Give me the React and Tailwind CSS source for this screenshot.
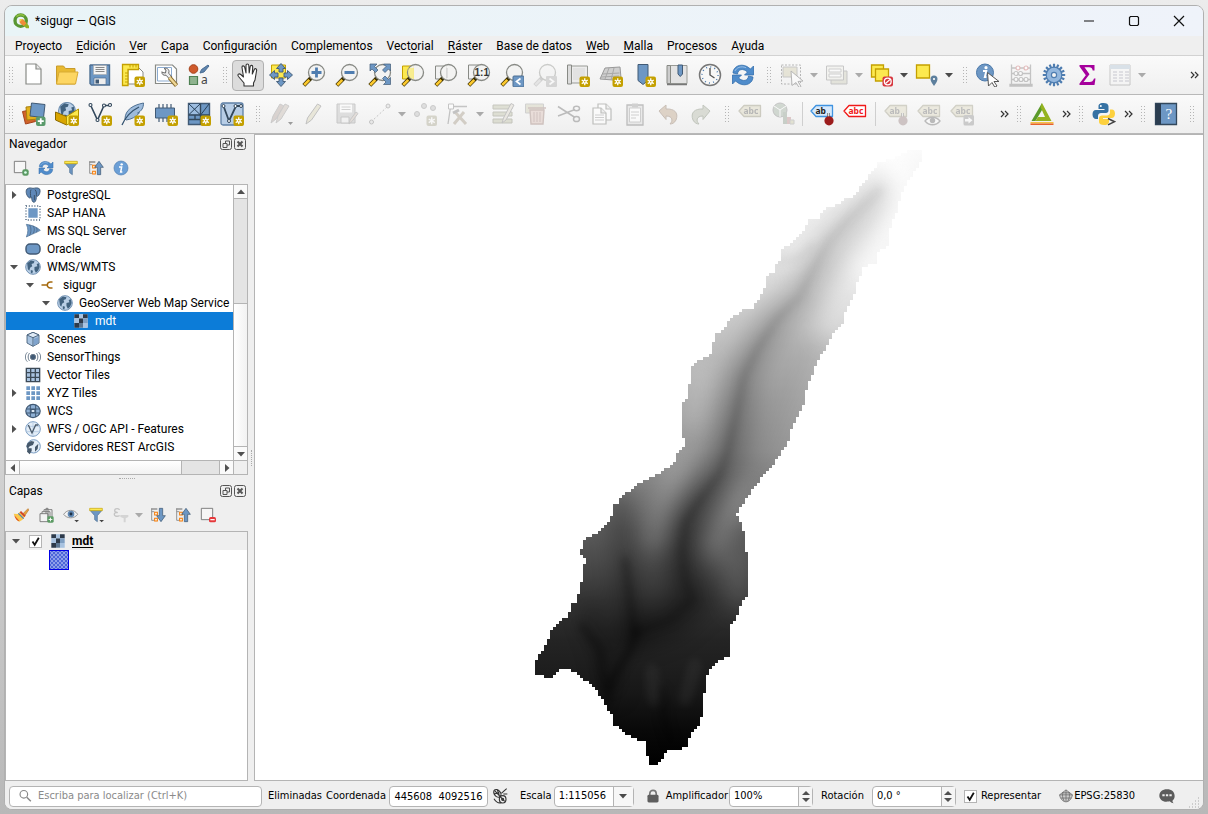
import React from "react";

const BLUE = "#6d97c4";
const NAVY = "#415a75";
const YEL = "#fce94f";
const GOLD = "#c4a000";

/* ---------- shared icon parts ---------- */

const Star = () => (
  <g>
    <rect x="13.5" y="13.5" width="10.500" height="10.500" rx="2" fill={GOLD} />
    <path d="M18.750 15.300v7M15.700 17l6.100 3.600M21.800 17l-6.100 3.600" stroke="#fff" strokeWidth="1.300" fill="none" />
    <circle cx="18.750" cy="18.800" r="1.900" fill="#fff" />
    <circle cx="18.750" cy="18.800" r="0.800" fill={GOLD} />
  </g>
);

const Lens = ({ grey, children }) => (
  <g>
    <path d="M9.500 14.500L1.800 22.400" stroke={grey ? "#999" : "#3a2e00"} strokeWidth="4" />
    <path d="M7.300 16.800L2.200 22" stroke={grey ? "#ccc" : "#fcc92e"} strokeWidth="2.600" />
    <circle cx="14.500" cy="9.500" r="8" fill="#f2f2f1" fillOpacity="0.880" stroke="#888a85" strokeWidth="1.300" />
    <path d="M8.500 9a6 6 0 0 1 6-5.600 7 7 0 0 0-6 5.600z" fill="#fff" />
    {children}
  </g>
);

const Globe = ({ cx = 12, cy = 12, r = 10 }) => (
  <g transform={`translate(${cx} ${cy}) scale(${r / 10})`}>
    <circle r="10" fill="#b9cfe6" stroke="#6f8fb0" strokeWidth="1.300" />
    <path d="M-8-5l5-4 5 1-1 3-3 1 1 3-3 2-1 4-2-2zM2 0l4-1-1-3 3-1 1 5-2 5-3 3-2-4zM-3 4l3 1-1 4-2-1z" fill="#41627f" />
  </g>
);

const Page = ({ x = 4, y = 1, w = 15, h = 20 }) => (
  <g>
    <path d={`M${x} ${y}h${w - 5}l5 5v${h - 5}h${-w}z`} fill="#fff" stroke="#888a85" strokeWidth="1.200" />
    <path d={`M${x + w - 5} ${y}v5h5`} fill="#e6e6e6" stroke="#888a85" strokeWidth="1.200" />
  </g>
);

const Tag = ({ fill, stroke, color, text }) => (
  <g>
    <path d="M1 9l5-5.500h16.500v11H6z" fill={fill} stroke={stroke} strokeWidth="1.300" strokeLinejoin="round" />
    <text x="5.500" y="12" fontSize="8.500" fontWeight="700" fontFamily="Noto Sans, sans-serif" fill={color}>{text}</text>
  </g>
);

const Pin = ({ color = "#9c1c1c" }) => (
  <g>
    <path d="M18.500 11v6" stroke="#666" strokeWidth="2.400" />
    <path d="M18.500 11v6" stroke="#ddd" strokeWidth="1" />
    <circle cx="19" cy="18.800" r="4.600" fill={color} />
  </g>
);

const Funnel = () => (
  <g>
    <path d="M3 5h18l-7 8v9l-4-3v-6z" fill="#6e97c4" stroke="#4d6f92" strokeWidth="1" />
    <path d="M2.500 2h19v3.500h-19z" fill={YEL} stroke={GOLD} strokeWidth="1" />
  </g>
);

const Refresh = () => (
  <g fill="#4f8ccb" stroke="#3570ad" strokeWidth="0.800" strokeLinejoin="round">
    <path d="M2 10C2 4 9 0 16 3.500L19.500 6 22.500 3v9h-9l3-3C12 5 7 6 6.500 11z" />
    <path d="M22 14c0 6-7 10-14 6.500L4.500 18l-3 3v-9h9l-3 3c4.500 4 9.500 3 10-2z" />
    <path d="M4 8c1-3 6-5.500 11-3.300" stroke="#a9cbec" fill="none" />
  </g>
);

const TreeArrow = ({ down }) => (
  <g>
    <path d="M2.500 2v18h4M2.500 7h4" stroke="#888" fill="none" strokeWidth="1.300" />
    <path d="M2 3h9" stroke="#888" strokeWidth="2" />
    <path d="M7 8h4v4H7zM7 17h4v4H7z" fill="#fff" stroke="#f57900" strokeWidth="1.600" />
    <path
      d={down ? "M14 2h5v11h4l-6.500 9L10 13h4z" : "M14 22h5V11h4L16.500 2 10 11h4z"}
      fill={BLUE}
      stroke={NAVY}
      strokeWidth="1.100"
    />
  </g>
);

const Raster = () => (
  <g>
    <path d="M2 2h20v20H2z" fill="#d8e4f2" />
    <path d="M2 2h7v6H2zM15 2h7v6h-7zM9 8h6v7H9zM2 15h7v7H2z" fill="#2d3a4a" />
    <path d="M9 2h6v6H9zM2 8h7v7H2zM15 15h7v7h-7z" fill="#a9c3e0" />
    <path d="M15 8h7v7h-7z" fill="#7f9fc2" />
    <path d="M9 15h6v7H9z" fill="#5c7691" />
  </g>
);

const Arrowheads = () => (
  <g fill={BLUE} stroke={NAVY} strokeWidth="0.700">
    <path d="M2 1h7L6.500 3.500 10 7 7.500 9.500 4 6 2 8z" />
    <path d="M22.500 1h-7L18 3.500 14.500 7 17 9.500 20.500 6l2 2z" />
    <path d="M22.500 21.500h-7L18 19l-3.500-3.500L17 13l3.500 3.500 2-2z" />
  </g>
);

const ICONS = {
  qgis: (
    <g>
      <circle cx="11.500" cy="11.500" r="8.500" fill="none" stroke="#589632" strokeWidth="5" />
      <path d="M5 5.500a9 9 0 0 1 12-1" stroke="#8fbe3f" strokeWidth="2.500" fill="none" />
      <path d="M11 10h5l8 9v4h-4l-9-8z" fill="#93b023" />
      <path d="M10 9.500h5l5 6-4 4-6-5z" fill="#f08b39" />
      <path d="M10 9.500h4l-4 4z" fill="#f0e64a" />
    </g>
  ),
  new: <Page />,
  open: (
    <g>
      <path d="M1.500 3h7l2 2.500H20V21H1.500z" fill="#e8b931" stroke="#c89b2b" />
      <path d="M4 9h19l-2.500 12H1.500z" fill="#fdd663" stroke="#d9ab35" />
    </g>
  ),
  save: (
    <g>
      <path d="M2.500 2h19v20h-18l-1.500-1.500V2.500z" fill="#6d97c4" stroke="#4d6f92" strokeWidth="1.400" />
      <path d="M5.500 2.500h13v9h-13z" fill="#f4f4f4" stroke="#aaa" strokeWidth="0.600" />
      <path d="M7.500 4.500h9M7.500 6.500h9M7.500 8.500h9" stroke="#888" />
      <path d="M6 15h12v6.500H6z" fill="#eee" stroke="#4d6f92" strokeWidth="0.700" />
      <path d="M7.500 16.500h3.500v4H7.500z" fill="#415a75" />
    </g>
  ),
  layoutNew: (
    <g>
      <path d="M7 5h11l4 4v12H7z" fill="#fff" stroke="#888a85" />
      <path d="M1.500 1.500h16v5H7v16H1.500z" fill={YEL} stroke={GOLD} strokeWidth="1.300" />
      <path d="M4 10h3M4 13h3M4 16h3M4 19h3M9 2v2.500M12 2v2.500M15 2v2.500" stroke={GOLD} />
      <Star />
    </g>
  ),
  layouts: (
    <g>
      <path d="M1.500 2h17l4 4v14.500h-21z" fill="#fff" stroke="#888a85" strokeWidth="1.200" />
      <path d="M3.500 4.500h14v13.500h-14z" fill="none" stroke="#8cabd0" />
      <path d="M8.500 9.500l3 .5.5-3-2-1.500c2.500-1 5 .5 5 3l-.3 1.700 3.300 3.800-2.500 2-3.500-3.800c-2.500.6-4.500-1-4-3.500z" fill="#eee" stroke="#666" />
      <path d="M15.500 14.500l7 8" stroke="#8a6d2f" strokeWidth="4.200" />
      <path d="M15.500 14.500l6.800 7.800" stroke="#f0d896" strokeWidth="2.400" />
    </g>
  ),
  style: (
    <g>
      <circle cx="6.500" cy="6" r="4.300" fill="#cf5a2c" stroke="#a5421b" />
      <path d="M13 10l1.500-3.500L21 2l1 1-5 6z" fill="#5f84ad" stroke="#41658c" strokeWidth="0.900" />
      <path d="M2.500 13.500h8v8h-8z" fill="#8fb38f" stroke="#4e8052" strokeWidth="1.200" />
      <text x="14" y="21" fontSize="12" fontFamily="Noto Sans, sans-serif" fill="#444">a</text>
    </g>
  ),
  pan: (
    <path
      d="M8 23v-3L2.500 13.500C1 11.500 3 10 4.800 11.500L7.500 14 6 4.500C5.800 2.500 8 2.300 8.600 4L10 10V2.500c0-2 2.600-2 2.800 0L13.200 10l1-6.500c.4-1.800 2.600-1.400 2.500.4L16.300 11l2-4.500c.8-1.600 2.700-.7 2.300 1L19 17l-1.500 3v3z"
      fill="#fff"
      stroke="#333"
      strokeWidth="1.100"
      strokeLinejoin="round"
    />
  ),
  panSel: (
    <g>
      <path d="M2.500 2h14v13h-14z" fill={YEL} stroke={GOLD} />
      <path
        d="M12 .5l4.500 5H14V9h-4V5.500H7.500zM12 23.500l-4.500-5H10V15h4v3.500h2.500zM.5 12l5-4.500V10H9v4H5.500v2.500zM23.500 12l-5-4.500V10H15v4h3.500v2.500z"
        fill={BLUE}
        stroke={NAVY}
        strokeWidth="0.900"
      />
    </g>
  ),
  zoomIn: <Lens><path d="M14.500 4.500v10M9.500 9.500h10" stroke="#4f7db0" strokeWidth="2.800" /></Lens>,
  zoomOut: <Lens><path d="M9.500 9.500h10" stroke="#4f7db0" strokeWidth="2.800" /></Lens>,
  zoomFull: <g><Lens /><Arrowheads /></g>,
  zoomSel: <g><path d="M1.500 3h11v13h-11z" fill={YEL} stroke={GOLD} /><Lens><path d="M7.500 5H13v11c-4 0-6-3-6-6z" fill={YEL} fillOpacity="0.550" /></Lens></g>,
  zoomLayer: <g><path d="M1.500 3h11v13h-11z" fill="#f2f2f2" stroke="#888a85" /><Lens><path d="M13 5v10" stroke="#ccc" /></Lens></g>,
  zoomNative: (
    <g>
      <path d="M1.500 2h10v14h-10z" fill="#f2f2f2" stroke="#888a85" />
      <Lens><text x="7.500" y="13" fontSize="10" fontWeight="700" fontFamily="Liberation Sans, sans-serif" fill="#333">1:1</text></Lens>
    </g>
  ),
  zoomLast: (
    <g>
      <Lens />
      <rect x="13" y="13" width="11" height="11" rx="1" fill={BLUE} stroke="#4d6f92" />
      <path d="M20.500 15.500l-4 3 4 3" stroke="#fff" strokeWidth="1.700" fill="none" />
    </g>
  ),
  zoomNext: (
    <g opacity="0.400">
      <Lens grey />
      <rect x="13" y="13" width="11" height="11" rx="1" fill="#aaa" />
      <path d="M16.500 15.500l4 3-4 3" stroke="#fff" strokeWidth="1.700" fill="none" />
    </g>
  ),
  mapView: (
    <g>
      <path d="M5 3h16.500v17H5z" fill="#ececec" stroke="#999b96" />
      <path d="M1.500 2h4v19h-4z" fill="#dcdcdc" stroke="#888a85" />
      <path d="M7 5h12v12H7z" fill="#e2e2e2" />
      <Star />
    </g>
  ),
  map3d: (
    <g>
      <path d="M6 5l15-1 1 11-8 2-13-1z" fill="#cfcfcf" stroke="#999" />
      <path d="M3.500 11l17-1M2 14l18-1M10 5l-4 11M15 5l-3 12" stroke="#a8a8a8" fill="none" />
      <Star />
    </g>
  ),
  bookmarkNew: <g><path d="M6 1.500h10v16l-5 4-5-4z" fill={BLUE} stroke={NAVY} /><Star /></g>,
  bookmarks: (
    <g>
      <path d="M5 2.500h17v18H5z" fill="#e3e3e3" stroke="#999b96" />
      <path d="M2 2.500h3.500v18H2z" fill="#ccc" stroke="#888a85" />
      <path d="M2 21.500h20" stroke="#777" strokeWidth="1.500" />
      <path d="M13 2h4.500v9l-2.250 2.500L13 11z" fill={BLUE} stroke={NAVY} />
    </g>
  ),
  clock: (
    <g>
      <circle cx="12" cy="12" r="10.500" fill="#f7f7f6" stroke="#777" strokeWidth="1.500" />
      <circle cx="12" cy="12" r="8" fill="none" stroke="#4f7db0" strokeWidth="1.500" strokeDasharray="1 3.190" />
      <path d="M12 5v7l4.500 3" stroke="#555" strokeWidth="1.400" fill="none" />
    </g>
  ),
  refresh: <Refresh />,
  select: (
    <g opacity="0.500">
      <path d="M1.500 2h19v19h-19z" fill="none" stroke="#777" strokeDasharray="2 1.500" />
      <path d="M3 4h14v10H3z" fill="#d6d2b8" stroke="#999" />
      <path d="M11 8l12 10-5 .5 3 5-2 1-3-5-4 3z" fill="#fff" stroke="#777" />
    </g>
  ),
  selectForm: (
    <g opacity="0.500">
      <path d="M6 8h16v13H6z" fill="#d4d4c4" stroke="#999" />
      <path d="M1.500 3h17v14h-17z" fill="#f0f0ea" stroke="#999" />
      <path d="M4 6h12v3H4zM4 11h12v3H4z" fill="#fff" stroke="#aaa" />
    </g>
  ),
  deselect: (
    <g>
      <path d="M1.500 2h12v12h-12z" fill={YEL} stroke={GOLD} strokeWidth="1.300" />
      <path d="M5.500 6h13v12h-13z" fill={YEL} stroke={GOLD} strokeWidth="1.300" />
      <rect x="12.500" y="13.500" width="10.500" height="10" rx="2" fill="#d7373f" />
      <circle cx="17.750" cy="18.500" r="3.400" fill="none" stroke="#fff" strokeWidth="1.300" />
      <path d="M15.500 20.500l4.500-4" stroke="#fff" strokeWidth="1.200" />
    </g>
  ),
  selectLoc: (
    <g>
      <path d="M1.500 2h13v13h-13z" fill={YEL} stroke={GOLD} strokeWidth="1.300" />
      <path d="M19 23c-2-3-3.500-5-3.500-7a3.500 3.500 0 0 1 7 0c0 2-1.500 4-3.500 7z" fill="#5d7f9d" />
      <circle cx="19" cy="16" r="1.100" fill="#fff" />
    </g>
  ),
  identify: (
    <g>
      <circle cx="9" cy="9.500" r="8.500" fill={BLUE} stroke="#4b78a9" />
      <circle cx="10" cy="4.700" r="1.600" fill="#fff" />
      <path d="M7 8h3.300L8.800 14h1.600" stroke="#fff" strokeWidth="1.900" fill="none" />
      <path d="M11.500 9.500l11.500 9h-5l3 4.500-2.200 1.200-2.800-4.700-3.500 3.500z" fill="#fff" stroke="#555" />
    </g>
  ),
  abacus: (
    <g opacity="0.450" fill="none" stroke="#888">
      <path d="M2.500 1.500v20M21.500 1.500v20M2 5h20M2 10.500h20M2 16.500h20M1 21.500h22v1.500H1z" strokeWidth="1.300" />
      <g fill="#fff" strokeWidth="1.200">
        <circle cx="9" cy="5" r="2" stroke="#c77" /><circle cx="17" cy="5" r="2" stroke="#c77" />
        <circle cx="7" cy="10.500" r="2" /><circle cx="11.500" cy="10.500" r="2" />
        <circle cx="7" cy="16.500" r="2" /><circle cx="12" cy="16.500" r="2" /><circle cx="17" cy="16.500" r="2" />
      </g>
    </g>
  ),
  gear: (
    <g>
      <path d="M12 .8v22.400M.8 12h22.400M4.100 4.100l15.800 15.800M19.900 4.100L4.100 19.900M7.700 1.700l8.600 20.600M16.300 1.700L7.700 22.300M1.700 7.700l20.600 8.600M22.300 7.700L1.700 16.300" stroke="#4f7db0" strokeWidth="2.200" />
      <circle cx="12" cy="12" r="7.800" fill="#93b7de" stroke="#4f7db0" strokeWidth="1.200" />
      <circle cx="12" cy="12" r="2.600" fill="#f4f4f4" stroke="#4f7db0" strokeWidth="1.200" />
    </g>
  ),
  sigma: <path d="M4.500 2h15v5.500h-1.800C17.300 5 16.300 4.300 14 4.300H9.500l5 7-6 7.700h6c2.500 0 3.700-1 4.500-3.500h1.500L19.500 22h-15v-1.500l6.300-8.200L4.500 3.500z" fill="#a5009c" />,
  table: (
    <g opacity="0.500">
      <path d="M2 2h20v20H2z" fill="#f6f6f6" stroke="#999" />
      <path d="M2 2h20v4H2z" fill="#bccbd9" />
      <path d="M5 9h4M11 9h4M17 9h4M5 12h4M11 12h4M17 12h4M5 15h4M11 15h4M17 15h4M5 18h4M11 18h4M17 18h4" stroke="#99a" />
    </g>
  ),
  dsm: (
    <g>
      <path d="M.5 9.500l10-2 3 12-10 2.500z" fill="#d0632a" stroke="#a5421b" />
      <path d="M4 5l11-1 1 13-11 1z" fill="#e3b11c" stroke="#a8800c" />
      <path d="M9.500 1l13.500 1.500-1.500 13L8 14z" fill={BLUE} stroke={NAVY} />
      <rect x="14" y="14.500" width="9.500" height="9.500" rx="2" fill="#5a9a6b" />
      <path d="M18.750 16.200v6M15.750 19.200h6" stroke="#fff" strokeWidth="1.800" />
    </g>
  ),
  geopackage: (
    <g>
      <Globe cx={12} cy={9} r={8.5} />
      <path d="M.5 10l11 4.500V23L.5 18z" fill="#d9a500" stroke="#8a6900" />
      <path d="M23.500 7l-12 7.500V23l12-6z" fill="#fce94f" stroke="#b29200" />
      <Star />
    </g>
  ),
  shapefile: (
    <g>
      <path d="M2.500 3l7 15L16 3.500h5" fill="none" stroke="#33485c" strokeWidth="1.600" />
      <g fill="#fff" stroke="#33485c" strokeWidth="1.100">
        <circle cx="2.500" cy="3" r="1.500" /><circle cx="9.500" cy="18" r="1.500" /><circle cx="16" cy="3.500" r="1.500" /><circle cx="22" cy="3" r="1.500" />
      </g>
      <Star />
    </g>
  ),
  feather: (
    <g>
      <path d="M4 17C4 8 12 3 22.500 1c0 5-2 8-6 10l2-.2C15 15 10 17.500 5 18z" fill="#9dbbdc" stroke="#4d6f92" />
      <path d="M1 23C4 16 10 9 18 5" stroke="#33526f" fill="none" strokeWidth="1.300" />
      <Star />
    </g>
  ),
  memory: (
    <g>
      <path d="M5 2v18M9 2v18M13 2v18M17 2v18" stroke={NAVY} strokeWidth="1.200" />
      <path d="M1.500 6h19v10h-19z" fill={BLUE} stroke={NAVY} />
      <Star />
    </g>
  ),
  mesh: (
    <g>
      <path d="M1.500 1.500h21v21h-21z" fill={BLUE} stroke={NAVY} strokeWidth="1.400" />
      <path d="M2 2h11v10.500H2z" fill="#9dbde0" />
      <path d="M1.500 13h21M13.500 1.500v21M2 17.500h11.500M8 13v4.500" stroke="#33485c" strokeWidth="1.400" fill="none" />
      <path d="M2 2l11 10.500M13 2L2 12.500M22 2l-8 10.500" stroke="#27415a" fill="none" />
      <Star />
    </g>
  ),
  virtual: (
    <g>
      <rect x="1" y="1" width="22" height="22" rx="2" fill="#b7cde6" stroke="#5d7fa5" strokeWidth="1.300" />
      <path d="M3.500 4l5.500 15L16 4h5.500" fill="none" stroke="#33485c" strokeWidth="1.800" />
      <g fill="#fff" stroke="#33485c"><circle cx="3.500" cy="4" r="1.500" /><circle cx="9" cy="19" r="1.500" /><circle cx="15.500" cy="4" r="1.500" /><circle cx="21" cy="4" r="1.500" /></g>
      <Star />
    </g>
  ),
  edits: (
    <g opacity="0.450">
      <path d="M2 21l2-7L11 2l4 2-8 13z" fill="#b9aaa4" stroke="#999" />
      <path d="M7 21l2-7L16 2l4 2-8 13z" fill="#c8bdb4" stroke="#999" />
      <path d="M19 20h5l-2.500 3z" fill="#333" />
    </g>
  ),
  pencil: <path d="M4 22l1.500-6L15.500 2l3.500 2L9.500 18z" fill="#e3e0ce" stroke="#aaa" opacity="0.700" />,
  saveEdits: (
    <g opacity="0.400">
      <path d="M2 2h18v19H2z" fill="#bbb" stroke="#888" />
      <path d="M5 2.500h12v8H5z" fill="#fff" /><path d="M6.500 5h9M6.500 7.500h9" stroke="#999" />
      <path d="M6 15h8v6H6z" fill="#eee" stroke="#888" />
      <path d="M14 22l1-4 6-8 2 1.500-6 8z" fill="#c9b9b0" stroke="#888" />
    </g>
  ),
  digitize: (
    <g opacity="0.450" stroke="#888">
      <path d="M3 20L20 4" strokeDasharray="2 2" />
      <circle cx="3.500" cy="20" r="2" fill="#ddd" /><circle cx="20" cy="4" r="2" fill="#ddd" />
    </g>
  ),
  points: (
    <g opacity="0.400">
      <g fill="#bbb" stroke="#888"><circle cx="11" cy="4" r="2.500" /><circle cx="20" cy="6" r="2.500" /><circle cx="4" cy="12" r="2.500" /></g>
      <rect x="13.500" y="13.500" width="10.500" height="10.500" rx="2" fill="#a9a58c" />
      <path d="M18.750 15.300v7M15.700 17l6.100 3.600M21.800 17l-6.100 3.600" stroke="#fff" strokeWidth="1.400" />
    </g>
  ),
  vertex: (
    <g opacity="0.450" stroke="#888">
      <path d="M4.500 5L2 22M5 4.500h16" strokeWidth="1.300" />
      <path d="M2.500 2h5v5h-5z" fill="#fff" />
      <path d="M8 22L18 10M9 10l11 12" strokeWidth="3" stroke="#aaa08f" />
      <path d="M7 11l6-3" strokeWidth="3" />
    </g>
  ),
  attrs: (
    <g opacity="0.450">
      <path d="M2 3h19v4H2zM2 10h19v4H2zM2 17h19v4H2z" fill="#c2c4ab" stroke="#8c8d7c" />
      <path d="M11 21l1.500-5L20 1.500l3 1.500-8 15z" fill="#ddd8cc" stroke="#888" />
    </g>
  ),
  trash: (
    <g opacity="0.400">
      <path d="M1.500 2h18v9h-18z" fill="#cbc8ac" stroke="#999" />
      <path d="M4 6h18M6 8h14l-1 14H7z" fill="#d8b9b0" stroke="#9a7a72" strokeWidth="1.400" />
      <path d="M10 10v10M13 10v10M16 10v10" stroke="#9a7a72" />
    </g>
  ),
  cut: (
    <g opacity="0.450" fill="none" stroke="#777" strokeWidth="1.500">
      <path d="M1 4.500l17 11M1 14l17-6.500" />
      <ellipse cx="19.500" cy="6.500" rx="3" ry="2.200" /><ellipse cx="19.500" cy="17" rx="3" ry="2.600" />
    </g>
  ),
  copy: (
    <g opacity="0.500">
      <Page x={8} y={2} w={13} h={16} /><Page x={3} y={6} w={13} h={16} />
      <path d="M5 13h9M5 15.500h9M5 18h9" stroke="#aaa" />
    </g>
  ),
  paste: (
    <g opacity="0.500">
      <path d="M4 3h16v20H4z" fill="#ddd" stroke="#888" strokeWidth="1.300" />
      <path d="M6.500 6h11v14h-11z" fill="#fff" stroke="#aaa" /><path d="M9 1.500h6v4H9z" fill="#aaa" />
      <path d="M8 10h8M8 13h8M8 16h5" stroke="#aaa" />
    </g>
  ),
  undo: <path d="M3 9l7-6v4c8-.5 13 3.500 10 11-1.500 3-4 4-6 4 3-3 3-8-4-8v3.500z" fill="#d3c3b3" stroke="#b5a79b" opacity="0.700" />,
  redo: <path d="M21 9l-7-6v4C6 6.500 1 10.500 4 18c1.500 3 4 4 6 4-3-3-3-8 4-8v3.500z" fill="#cdd0c6" stroke="#aab0a4" opacity="0.700" />,
  tagOff: <g opacity="0.500"><Tag fill="#ddd9c2" stroke="#a5a28d" color="#777" text="abc" /></g>,
  diagram: (
    <g opacity="0.400">
      <circle cx="9" cy="8" r="7" fill="#9a9" stroke="#777" /><path d="M9 8l6-4M9 8v7M9 8L3 4" stroke="#fff" />
      <path d="M12 10h4v12h-4z" fill="#898" /><path d="M16 15h4v7h-4z" fill="#b88" /><path d="M19 18h4v4h-4z" fill="#c9c9a0" stroke="#999" />
    </g>
  ),
  tagPin: <g><Tag fill="#d7e9fb" stroke="#3f93e0" color="#222" text="ab" /><Pin /></g>,
  tagRed: <Tag fill="#fff" stroke="#f01a1a" color="#f01a1a" text="abc" />,
  tagPinOff: <g opacity="0.450"><Tag fill="#ddd9c2" stroke="#a5a28d" color="#777" text="ab" /><Pin color="#a08a8a" /></g>,
  tagEye: (
    <g opacity="0.450">
      <Tag fill="#ddd9c2" stroke="#a5a28d" color="#777" text="abc" />
      <path d="M8 19c4-5 11-5 15 0-4 5-11 5-15 0z" fill="#fff" stroke="#777" strokeWidth="1.300" /><circle cx="15.500" cy="18.500" r="2.700" fill="#777" />
    </g>
  ),
  tagMove: (
    <g opacity="0.450">
      <Tag fill="#ddd9c2" stroke="#a5a28d" color="#777" text="abc" />
      <rect x="13.500" y="13" width="10.500" height="10.500" rx="1.500" fill="#999" /><path d="M15 17h3.500v-2l4 3.300-4 3.300v-2H15z" fill="#fff" />
    </g>
  ),
  lastools: (
    <g>
      <path d="M12 1L1.500 19h4L12 8z" fill="#5a9a2a" />
      <path d="M12 1l9.500 18h-16L8 15h7L10.500 5z" fill="#94b31f" />
      <path d="M.5 20h23v1.500H.5z" fill="#f6c344" /><path d="M.5 21.500h23V23H.5z" fill="#e8622c" />
    </g>
  ),
  python: (
    <g>
      <path d="M11.500 1C7 1 6.500 3 6.500 4.500V7h6v1H4C1.500 8 .5 10 .5 12.500S2 17 4 17h2v-3c0-2 1.500-3 3-3h5c1.500 0 2.500-1 2.500-2.500v-4C16.500 2 14.500 1 11.500 1z" fill="#3672a4" />
      <circle cx="8.800" cy="4" r="1" fill="#fff" />
      <path d="M12 23c4.500 0 5-2 5-3.500V17h-6v-1h8.500c2.500 0 3.500-2 3.500-4.500S21.500 7.500 20 7.500h-2v3c0 2-1.500 3-3 3h-5c-1.500 0-3 1-3 2.500v4C7 22 9 23 12 23z" fill="#fdd13f" />
      <path d="M16 16.500l6.500 3.200-6.500 3.200" stroke="#444" strokeWidth="1.600" fill="none" />
    </g>
  ),
  help: (
    <g>
      <path d="M1.500 1.500h21v21h-21z" fill={BLUE} stroke="#33485c" strokeWidth="1.300" />
      <path d="M1.500 1.500H7v21H1.500z" fill="#2b3d50" />
      <text x="11.500" y="17" fontSize="15" fontFamily="Liberation Serif, serif" fill="#fff">?</text>
    </g>
  ),
  addSel: (
    <g>
      <path d="M2 2h17v17H2z" fill="#f6f6f6" stroke="#777" strokeWidth="1.400" />
      <rect x="14" y="14" width="9.500" height="9.500" rx="3" fill="#5b9a63" /><circle cx="18.700" cy="18.700" r="2" fill="#dfe" />
    </g>
  ),
  funnel: <Funnel />,
  funnelMenu: <g><Funnel /><path d="M17 19.500h7L20.500 23z" fill="#444" /></g>,
  collapse: <TreeArrow />,
  expand: <TreeArrow down />,
  info: (
    <g>
      <circle cx="12" cy="12" r="10.500" fill="#6b9fd6" stroke="#4f7db0" />
      <circle cx="13" cy="6.500" r="1.800" fill="#fff" /><path d="M9 10.500h4L11.500 18h2.500" stroke="#fff" strokeWidth="2.200" fill="none" />
    </g>
  ),
  brush: (
    <g>
      <path d="M14 11l8.500-8.500 1 2L17 14z" fill="#e8a33c" stroke="#b9762a" />
      <path d="M1 10l6 .5 4-3.500 7 7c-2 4-5 7-9 8-3-2-6-7-8-12z" fill="#fbc94a" />
      <path d="M2 12.500l8 9c-4-.5-7-4-8-9z" fill="#e0531f" /><path d="M8 9.500l8 8" stroke="#4a7fc0" strokeWidth="1.800" />
      <path d="M11 7l7 7" stroke="#d0452c" strokeWidth="3" />
    </g>
  ),
  addGroup: (
    <g fill="#f3f3f3" stroke="#777" strokeWidth="1.400">
      <path d="M9 4h12v13H9z" /><path d="M6 7h12v13H6z" /><path d="M3 10h12v12H3z" /><path d="M12 10V2h3v13" fill="none" />
      <rect x="14" y="14" width="9.500" height="9.500" rx="2" fill="#5b9a63" stroke="none" /><path d="M18.700 16v5.500M16 18.700h5.500" stroke="#fff" />
    </g>
  ),
  eye: (
    <g>
      <path d="M1 11C6 3 17 3 22 11c-5 7-16 7-21 0z" fill="#f3f3f3" stroke="#888" strokeWidth="1.300" />
      <circle cx="12" cy="10.500" r="5" fill="#6088b3" /><circle cx="12" cy="10.500" r="2.200" fill="#1d3044" />
      <path d="M17 19.500h7L20.500 23z" fill="#444" />
    </g>
  ),
  epsilon: (
    <g opacity="0.500">
      <path d="M10 4C6 1 1 3 3 7l4 1.500H4C0 10 2 16 10 13" fill="none" stroke="#999" strokeWidth="2" />
      <path d="M11 12h12v3l-4 2v6h-3v-6l-5-2z" fill="#bbb" />
    </g>
  ),
  remove: (
    <g>
      <path d="M2 2h17v17H2z" fill="#f6f6f6" stroke="#777" strokeWidth="1.400" />
      <rect x="13.500" y="15" width="10.500" height="8" rx="2.500" fill="#e5383b" /><path d="M15.500 19h6.500" stroke="#fff" strokeWidth="1.800" />
    </g>
  ),
  postgres: (
    <g>
      <path d="M3 3c4-3 7-1 9-1s7-2 10 1c2 4-1 10-3 11l-2-1c0 4 0 8-3 10-3 0-4-3-4-8-1 1-3 2-4 1C3 14 0 7 3 3z" fill="#5f88b8" stroke={NAVY} strokeWidth="1.400" />
      <path d="M9 4c-2 4 0 8-1 11M15 4c3 3 2 7 2 9M14 12v8" stroke="#33485c" fill="none" strokeWidth="1.300" />
    </g>
  ),
  hana: <g><path d="M5 5h14v14H5z" fill={BLUE} /><path d="M1.500 1.500h21v21h-21z" fill="none" stroke={NAVY} strokeWidth="2" strokeDasharray="1.500 2.700" /></g>,
  mssql: (
    <g>
      <path d="M2 2c8 1 16 4 21 9-5 3-13 6-21 10 3-7 3-13 0-19z" fill={BLUE} stroke="#4d6f92" />
      <path d="M7 3c3 5 2 11 0 16M12 4c3 4 2 9 0 12M17 7c2 3 1 5 0 7" stroke={NAVY} fill="none" />
    </g>
  ),
  oracle: <rect x="1.500" y="4.500" width="21" height="15" rx="6" fill={BLUE} stroke={NAVY} strokeWidth="2.200" />,
  globe: <Globe cx={12} cy={12} r={11} />,
  plug: <path d="M1 12h11M23 6h-4c-8 0-9 12 0 12h4" fill="none" stroke="#a5690d" strokeWidth="3" />,
  raster: <Raster />,
  scene: (
    <g stroke="#415a75" strokeWidth="1.300">
      <path d="M3 6l9-4 9 4v12l-9 5-9-5z" fill="#a8c3e0" /><path d="M3 6l9 4 9-4-9-4z" fill="#dfeaf5" /><path d="M12 10v13" />
      <path d="M13 12l7-3v9l-7 4z" fill="#7fa3cc" stroke="none" />
    </g>
  ),
  sensor: (
    <g fill="none" stroke="#6b7c8d" strokeWidth="1.500">
      <circle cx="12" cy="12" r="4" fill="#415a75" /><path d="M7 6c-3 3-3 9 0 12M3.500 5c-4 4-4 10 0 14M17 6c3 3 3 9 0 12M20.500 5c4 4 4 10 0 14" />
    </g>
  ),
  vtiles: <g><path d="M2 2h20v20H2z" fill="#a9c3e0" /><path d="M2 2h20v20H2zM8.500 2v20M15.500 2v20M2 8.500h20M2 15.500h20" stroke="#3c4a57" strokeWidth="2" fill="none" /></g>,
  xyz: <path d="M2 2h5.500v5.500H2zM9.500 2H15v5.500H9.500zM17 2h5.500v5.500H17zM2 9.500h5.500V15H2zM9.500 9.500H15V15H9.500zM17 9.500h5.500V15H17zM2 17h5.500v5.500H2zM9.500 17H15v5.500H9.500zM17 17h5.500v5.500H17z" fill={BLUE} />,
  wcs: (
    <g>
      <ellipse cx="12" cy="12" rx="10.800" ry="9.800" fill="#8fb0d4" stroke={NAVY} strokeWidth="1.800" />
      <path d="M2 9h20M2 15h20M8 3v18M16 3v18" stroke={NAVY} strokeWidth="1.500" /><path d="M8 9h8v6H8z" fill={NAVY} /><path d="M10 10.500h4v3h-4z" fill="#dbe7f3" />
    </g>
  ),
  wfs: (
    <g>
      <circle cx="12" cy="12" r="11" fill="#e3edf7" stroke="#7d9fc4" strokeWidth="1.500" />
      <path d="M3 8h18M3 16h18M12 2v20" stroke="#a9c3e0" /><path d="M5 6l5.500 12L16 6h4" stroke="#4a5a6a" strokeWidth="2" fill="none" />
    </g>
  ),
  arcgis: (
    <g>
      <circle cx="13" cy="11" r="10" fill="#e3edf7" stroke="#7d9fc4" strokeWidth="1.500" />
      <path d="M4 6l5-3 5 1-2 5-5 2-3 4-2-4zM4 14h6v4l-3 5-4-4zM15 12l5-5-1 8-4 4z" fill="#46586a" />
    </g>
  ),
  search: <g fill="none" stroke="#888" strokeWidth="2"><circle cx="10" cy="9" r="6.500" /><path d="M15 14l7 7" strokeWidth="2.500" /></g>,
  track: (
    <g fill="none" stroke="#333" strokeWidth="1.700">
      <ellipse cx="8" cy="8" rx="4.500" ry="6.500" transform="rotate(-40 8 8)" /><ellipse cx="16" cy="17" rx="5" ry="5.500" />
      <path d="M4 4l15 16M8 3l3 7M3 9l8-2M14 8l8-7M17 9h6M3 16c3 5 7 7 11 6" /><circle cx="16" cy="17" r="1.500" />
    </g>
  ),
  lock: <g><path d="M6.500 11V7.500C6.500 0.500 17.500.5 17.500 7.500V11" fill="none" stroke="#777" strokeWidth="2.800" /><rect x="2.500" y="10" width="19" height="13" rx="2.500" fill="#5e5e5e" /></g>,
  crs: (
    <g fill="#ccc" stroke="#6a6a6a" strokeWidth="1.300">
      <path d="M12 1.500L23 10c-1 7-6 12-11 12S2 17 1 10z" /><path d="M1 10h22M3 15.500h18M12 1.500V22M7 5c-2 5-1 11 2 16M17 5c2 5 1 11-2 16M6 6.500h12" fill="none" />
    </g>
  ),
  bubble: <g><path d="M12 2C5 2 .5 6 .5 11.500c0 5 4.500 9 10.500 9 2 0 3 0 5-.5 2 2 4 3 6 3-1-1-1.800-2.500-1.800-4 2-1.500 3.300-4 3.300-7C23.500 6 19 2 12 2z" fill="#5c5c5c" /><path d="M5 11h3.500M10.300 11h3.500M15.600 11h3.500" stroke="#eee" strokeWidth="3" /></g>,
};

const Icon = ({ name, className = "size-6" }) => (
  <svg viewBox="0 0 24 24" className={`${className} shrink-0`} aria-hidden="true">
    {ICONS[name]}
  </svg>
);

/* ---------- toolbars ---------- */

const Caret = ({ dim }) => (
  <svg viewBox="0 0 8 5" className="h-[5px] w-2 shrink-0" aria-hidden="true">
    <path d="M0 0h8L4 4.500z" fill={dim ? "#aaa" : "#4a4a4a"} />
  </svg>
);

const Handle = ({ first }) => (
  <div className={first ? "flex w-3 shrink-0 justify-center" : "flex w-4 shrink-0 justify-center pl-1"}>
    <svg viewBox="0 0 4 18" className="h-[18px] w-1" aria-hidden="true">
      <path d="M.5 1v17M3.500 1v17" stroke="#b5b5b5" strokeDasharray="1 2" />
    </svg>
  </div>
);

const Tool = ({ name, label, active, menu, dim }) => (
  <div className="flex shrink-0 items-center">
    <div className="flex w-[33px] justify-center">
      <button
        aria-label={label}
        className={
          active
            ? "flex h-[31px] w-8 items-center justify-center rounded-sm border border-[#b0b0b0] bg-[#dcdcdc]"
            : "flex h-[31px] w-8 items-center justify-center"
        }
      >
        <Icon name={name} />
      </button>
    </div>
    {menu && (
      <button aria-label={`${label}: opciones`} className="flex h-6 w-3 items-center justify-center">
        <Caret dim={dim} />
      </button>
    )}
  </div>
);

const More = ({ className }) => (
  <button aria-label="Más herramientas" className={`flex shrink-0 items-center justify-end ${className}`}>
    <svg viewBox="0 0 9 8" className="h-2 w-[9px]" fill="none" stroke="#333" strokeWidth="1.200" aria-hidden="true">
      <path d="M1 1l3 3-3 3M5 1l3 3-3 3" />
    </svg>
  </button>
);

const Divider = ({ className }) => (
  <div className={`flex h-6 shrink-0 justify-center ${className}`}>
    <div className="w-px bg-[#cfcfcf]" />
  </div>
);

const renderTools = (list) =>
  list.map(([name, label, menu, dim]) => <Tool key={name} name={name} label={label} menu={menu} dim={dim} active={name === "pan"} />);

const MENUS = ["Pro&yecto", "&Edición", "&Ver", "&Capa", "Con&figuración", "Co&mplementos", "Vect&orial", "&Ráster", "Base de &datos", "&Web", "&Malla", "Pro&cesos", "A&yuda"];

const MenuBar = () => (
  <nav className="flex h-5 items-center border-b border-[#d2d2d2] bg-[#efefef] pl-[3px]" aria-label="Menú">
    {MENUS.map((m) => {
      const [a, b] = m.split("&");
      return (
        <button key={m} className="shrink-0 px-[7px] leading-[18px] whitespace-nowrap">
          {a}
          <span className="underline underline-offset-2">{b[0]}</span>
          {b.slice(1)}
        </button>
      );
    })}
  </nav>
);

const TitleBar = () => (
  <header className="flex h-[30px] shrink-0 items-center bg-linear-to-r from-[#e9f4f7] to-[#eff3fa] pl-2">
    <Icon name="qgis" className="size-4" />
    <h1 className="ml-1.5 flex-1">*sigugr — QGIS</h1>
    <div className="flex gap-[13px] pr-2">
      {[
        ["Minimizar", "M1 6h10"],
        ["Maximizar", "M2.500 1.500h7l1 1v7l-1 1h-7l-1-1v-7z"],
        ["Cerrar", "M1 1l10 10M11 1L1 11"],
      ].map(([label, d]) => (
        <button key={label} aria-label={label} className="flex h-6 w-8 items-center justify-center">
          <svg viewBox="0 0 12 12" className="size-3" fill="none" stroke="#111" strokeWidth="1.200" aria-hidden="true">
            <path d={d} />
          </svg>
        </button>
      ))}
    </div>
  </header>
);

const BAR = "flex h-[39px] shrink-0 items-center overflow-hidden border-b border-[#b8b8b8] bg-linear-to-b from-[#fafafa] to-[#efefef]";

const Toolbars = () => (
  <>
    <div className={BAR} role="toolbar" aria-label="Proyecto y navegación">
      <Handle first />
      {renderTools([["new", "Nuevo"], ["open", "Abrir"], ["save", "Guardar"], ["layoutNew", "Nueva composición"], ["layouts", "Composiciones"], ["style", "Estilos"]])}
      <Handle />
      {renderTools([
        ["pan", "Desplazar mapa"], ["panSel", "Desplazar a selección"], ["zoomIn", "Acercar"], ["zoomOut", "Alejar"],
        ["zoomFull", "Zum general"], ["zoomSel", "Zum a selección"], ["zoomLayer", "Zum a capa"], ["zoomNative", "Zum nativo"],
        ["zoomLast", "Zum anterior"], ["zoomNext", "Zum siguiente"], ["mapView", "Nueva vista"], ["map3d", "Nueva vista 3D"],
        ["bookmarkNew", "Nuevo marcador"], ["bookmarks", "Marcadores"], ["clock", "Controlador temporal"], ["refresh", "Actualizar"],
      ])}
      <Handle />
      {renderTools([["select", "Seleccionar", true, true], ["selectForm", "Seleccionar por valor", true, true], ["deselect", "Deseleccionar", true], ["selectLoc", "Seleccionar por localización", true]])}
      <Handle />
      {renderTools([["identify", "Identificar"], ["abacus", "Calculadora"], ["gear", "Procesos"], ["sigma", "Estadísticas"], ["table", "Tabla de atributos", true, true]])}
      <More className="ml-auto w-8 pr-1" />
    </div>
    <div className={BAR} role="toolbar" aria-label="Capas y edición">
      <Handle first />
      {renderTools([["dsm", "Administrador de fuentes"], ["geopackage", "Nuevo GeoPackage"], ["shapefile", "Nuevo Shapefile"], ["feather", "Nueva SpatiaLite"], ["memory", "Nueva capa temporal"], ["mesh", "Nueva malla"], ["virtual", "Nueva capa virtual"]])}
      <Handle />
      {renderTools([
        ["edits", "Ediciones actuales"], ["pencil", "Conmutar edición"], ["saveEdits", "Guardar cambios"], ["digitize", "Digitalizar", true, true],
        ["points", "Añadir punto"], ["vertex", "Herramienta de vértices", true, true], ["attrs", "Modificar atributos"], ["trash", "Borrar"],
        ["cut", "Cortar"], ["copy", "Copiar"], ["paste", "Pegar"], ["undo", "Deshacer"], ["redo", "Rehacer"],
      ])}
      <Handle />
      {renderTools([["tagOff", "Etiquetado"], ["diagram", "Diagramas"]])}
      <Divider className="w-1.5" />
      {renderTools([["tagPin", "Resaltar etiquetas"], ["tagRed", "Etiquetas no colocadas"]])}
      <Divider className="w-2" />
      {renderTools([["tagPinOff", "Fijar etiquetas"], ["tagEye", "Mostrar etiquetas"], ["tagMove", "Mover etiqueta"]])}
      <More className="w-[31px]" />
      <Handle />
      <Tool name="lastools" label="Complemento" />
      <More className="w-[13px]" />
      <Handle />
      <Tool name="python" label="Consola de Python" />
      <More className="w-[13px]" />
      <Handle />
      <Tool name="help" label="Ayuda" />
      <Handle />
    </div>
  </>
);

/* ---------- docks ---------- */

const DockHeader = ({ title }) => (
  <div className="flex h-5 shrink-0 items-center gap-0.5 pr-0.5 pl-1">
    <h2 className="flex-1">{title}</h2>
    {[
      ["Desacoplar", "M3 5.500h4v4H3zM5.500 5.500v-2.500h4v4H7"],
      ["Cerrar", "M3.500 3.500l5 5M8.500 3.500l-5 5"],
    ].map(([label, d], i) => (
      <button key={label} aria-label={`${label} ${title}`} className="size-3">
        <svg viewBox="0 0 12 12" className="size-3" fill="none" stroke="#555" aria-hidden="true">
          <rect x="0.500" y="0.500" width="11" height="11" rx="2" />
          <path d={d} strokeWidth={i ? 2 : 1} />
        </svg>
      </button>
    ))}
  </div>
);

const SmallTool = ({ name, label }) => (
  <button aria-label={label} className="flex h-6 w-[25px] shrink-0 items-center justify-center">
    <Icon name={name} className="size-4" />
  </button>
);

const Expander = ({ state }) => (
  <span className="flex w-4 shrink-0 justify-center">
    {state && (
      <svg viewBox="0 0 8 8" className="size-2" aria-hidden="true">
        <path d={state === "open" ? "M0 2h8L4 6.500z" : "M2 0v8l4.500-4z"} fill="#505050" />
      </svg>
    )}
  </span>
);

const TREE = [
  ["postgres", "PostgreSQL", "closed", "pl-0"],
  ["hana", "SAP HANA", "", "pl-0"],
  ["mssql", "MS SQL Server", "", "pl-0"],
  ["oracle", "Oracle", "", "pl-0"],
  ["globe", "WMS/WMTS", "open", "pl-0"],
  ["plug", "sigugr", "open", "pl-4"],
  ["globe", "GeoServer Web Map Service", "open", "pl-8"],
  ["raster", "mdt", "", "pl-12"],
  ["scene", "Scenes", "", "pl-0"],
  ["sensor", "SensorThings", "", "pl-0"],
  ["vtiles", "Vector Tiles", "", "pl-0"],
  ["xyz", "XYZ Tiles", "closed", "pl-0"],
  ["wcs", "WCS", "", "pl-0"],
  ["wfs", "WFS / OGC API - Features", "closed", "pl-0"],
  ["arcgis", "Servidores REST ArcGIS", "", "pl-0"],
];

const ScrollArrow = ({ d, label }) => (
  <button aria-label={label} className="flex size-[13px] shrink-0 items-center justify-center bg-[#fafafa]">
    <svg viewBox="0 0 8 8" className="size-2" aria-hidden="true">
      <path d={d} fill="#505050" />
    </svg>
  </button>
);

const Browser = () => (
  <section className="flex h-[341px] shrink-0 flex-col" aria-label="Navegador">
    <DockHeader title="Navegador" />
    <div className="flex h-[30px] shrink-0 items-center pb-0.5 pl-[3px]">
      <SmallTool name="addSel" label="Añadir capas" />
      <SmallTool name="refresh" label="Actualizar" />
      <SmallTool name="funnel" label="Filtrar" />
      <SmallTool name="collapse" label="Comprimir todo" />
      <SmallTool name="info" label="Propiedades" />
    </div>
    <div className="flex min-h-0 flex-1 flex-col border border-[#b4b4b4] bg-white">
      <div className="flex min-h-0 flex-1">
        <ul className="min-w-0 flex-1 overflow-hidden pt-px" role="tree">
          {TREE.map(([icon, text, state, pad]) => (
            <li
              key={text}
              role="treeitem"
              aria-selected={text === "mdt"}
              className={`flex h-[18px] items-center whitespace-nowrap ${pad} ${text === "mdt" ? "bg-[#0c7cd8] text-white" : ""}`}
            >
              <Expander state={state} />
              <span className="flex w-[25px] shrink-0 items-center pl-[3px]">
                <Icon name={icon} className={icon === "plug" ? "size-3" : "size-4"} />
              </span>
              {text}
            </li>
          ))}
        </ul>
        <div className="flex w-3.5 shrink-0 flex-col border-l border-[#b4b4b4] bg-[#e4e4e4]">
          <ScrollArrow label="Subir" d="M0 6h8L4 1.500z" />
          <div className="h-[106px] border-y border-[#b4b4b4]" />
          <div className="flex-1 border-b border-[#b4b4b4] bg-linear-to-r from-white to-[#f2f2f2]" />
          <ScrollArrow label="Bajar" d="M0 2h8L4 6.500z" />
        </div>
      </div>
      <div className="flex h-3.5 shrink-0 border-t border-[#b4b4b4] bg-[#e4e4e4]">
        <ScrollArrow label="Izquierda" d="M6 0v8L1.500 4z" />
        <div className="w-[163px] border-x border-[#b4b4b4] bg-linear-to-b from-white to-[#f2f2f2]" />
        <div className="flex-1 border-r border-[#b4b4b4]" />
        <ScrollArrow label="Derecha" d="M2 0v8l4.500-4z" />
        <div className="w-3.5 border-l border-[#b4b4b4] bg-[#efefef]" />
      </div>
    </div>
  </section>
);

const Tick = ({ id, label }) => (
  <span className="relative flex size-[13px] shrink-0">
    <input
      id={id}
      type="checkbox"
      defaultChecked
      aria-label={label}
      className="peer size-[13px] appearance-none border border-[#b4b4b4] bg-white"
    />
    <svg viewBox="0 0 13 13" className="pointer-events-none absolute inset-0 hidden size-[13px] peer-checked:block" aria-hidden="true">
      <path d="M3.500 6.500l2.200 3.300L9.800 2.800" fill="none" stroke="#111" strokeWidth="1.800" />
    </svg>
  </span>
);

const Layers = () => (
  <section className="flex min-h-0 flex-1 flex-col" aria-label="Capas">
    <DockHeader title="Capas" />
    <div className="flex h-[30px] shrink-0 items-center pb-0.5 pl-[3px]">
      <SmallTool name="brush" label="Estilo de capa" />
      <SmallTool name="addGroup" label="Añadir grupo" />
      <SmallTool name="eye" label="Temas de mapa" />
      <SmallTool name="funnelMenu" label="Filtrar leyenda" />
      <SmallTool name="epsilon" label="Filtrar por expresión" />
      <span className="flex w-3 justify-center"><Caret dim /></span>
      <SmallTool name="expand" label="Expandir todo" />
      <SmallTool name="collapse" label="Comprimir todas las capas" />
      <SmallTool name="remove" label="Eliminar capa" />
    </div>
    <div className="min-h-0 flex-1 border border-[#b4b4b4] bg-white">
      <div className="flex h-[18px] items-center bg-[#efefef] pl-0.5">
        <Expander state="open" />
        <span className="ml-[5px] flex"><Tick label="Visibilidad de mdt" /></span>
        <Icon name="raster" className="ml-2 size-4" />
        <span className="ml-1.5 font-bold underline underline-offset-2">mdt</span>
      </div>
      <svg viewBox="0 0 20 20" className="ml-[43px] size-5" shapeRendering="crispEdges" aria-hidden="true">
        <defs>
          <pattern id="hatch" width="4" height="4" patternUnits="userSpaceOnUse">
            <rect width="4" height="4" fill="#4c66d8" />
            <path d="M0 0h2v2H0zM2 2h2v2H2z" fill="#8ea0ea" />
          </pattern>
        </defs>
        <rect x="0.500" y="0.500" width="19" height="19" fill="url(#hatch)" stroke="#0000e6" />
      </svg>
    </div>
  </section>
);

/* ---------- map canvas ---------- */

const OUTLINE = [
  [910, 150], [903, 153], [893, 158], [877, 163], [873, 170], [867, 177], [860, 185], [857, 193], [851, 197], [843, 200], [833, 207],
  [823, 209], [818, 218], [808, 220], [805, 227], [797, 235], [790, 243], [783, 248], [778, 255], [781, 258], [775, 263], [775, 272], [765, 275],
  [765, 287], [761, 293], [755, 303], [752, 308], [743, 310], [735, 315], [727, 322], [723, 330], [715, 333], [712, 342], [712, 350],
  [708, 357], [697, 360], [689, 367], [689, 383], [686, 385], [686, 400], [682, 402], [682, 438], [686, 440], [685, 443], [682, 448],
  [676, 455], [672, 465], [663, 470], [655, 475], [638, 483], [628, 492], [620, 495], [619, 502], [613, 505], [610, 517], [607, 523],
  [600, 530], [590, 537], [583, 539], [583, 548], [580, 549], [580, 556], [583, 558], [587, 562], [583, 565], [583, 580], [580, 582],
  [580, 590], [577, 593], [577, 602], [570, 605], [567, 617], [560, 620], [550, 630], [547, 640], [543, 650], [537, 657], [534, 663],
  [534, 673], [545, 678], [550, 678], [560, 670], [570, 670], [580, 677], [590, 685], [603, 700], [605, 708], [613, 717], [613, 725],
  [623, 732], [637, 741], [646, 743], [646, 753], [649, 765], [655, 765], [668, 750], [685, 748], [688, 738], [695, 728], [699, 723],
  [702, 713], [703, 697], [705, 680], [710, 668], [720, 660], [728, 657], [728, 627], [735, 620], [738, 607], [745, 598], [748, 595],
  [748, 555], [745, 553], [745, 537], [740, 523], [735, 515], [740, 507], [747, 497], [753, 488], [763, 475], [775, 461], [782, 450],
  [788, 440], [790, 430], [798, 413], [803, 403], [805, 393], [810, 377], [818, 360], [827, 343], [833, 333], [842, 323], [844, 312],
  [853, 297], [857, 280], [863, 267], [875, 263], [878, 250], [888, 247], [890, 223], [897, 210], [900, 193], [907, 182], [915, 170], [922, 157], [922, 151],
];

const CELL = 3;

/* Rasterises the basin outline into square cells, one run of cells per row. */
function cellPath() {
  let d = "";
  for (let y = 150; y < 768; y += CELL) {
    const cy = y + CELL / 2;
    const xs = [];
    OUTLINE.forEach(([x1, y1], i) => {
      const [x2, y2] = OUTLINE[(i + 1) % OUTLINE.length];
      if (y1 <= cy !== y2 <= cy) xs.push(x1 + ((cy - y1) / (y2 - y1)) * (x2 - x1));
    });
    xs.sort((a, b) => a - b);
    for (let k = 0; k + 1 < xs.length; k += 2) {
      const a = Math.round(xs[k] / CELL) * CELL + 1;
      const b = Math.round(xs[k + 1] / CELL) * CELL + 1;
      if (b > a) d += `M${a} ${y}H${b}V${y + CELL}H${a}z`;
    }
  }
  return d;
}

const BASIN = cellPath();

const STOPS = [
  [150, "#fbfbfb"], [190, "#efefef"], [240, "#e6e6e6"], [290, "#d8d8d8"], [320, "#c9c9c9"], [360, "#b8b8b8"], [400, "#a8a8a8"], [450, "#979797"],
  [490, "#7a7a7a"], [530, "#5c5c5c"], [570, "#464646"], [600, "#343434"], [640, "#242424"], [690, "#191919"], [730, "#090909"], [765, "#000000"],
];

/* Depth of the main river valley, from the headwaters down to the mouth. */
const VALLEY = [[190, 0.1], [300, 0.17], [340, 0.22], [450, 0.3], [520, 0.4], [640, 0.35]];

const RIVER = "M880 190L850 218 828 242 812 272 800 296 778 318 758 348 744 376 736 415 728 450 720 474 700 500 686 522 682 550 685 580 692 600 670 620 636 632";

const Terrain = () => (
  <svg viewBox="255 135 948 645" className="h-full w-full" role="img" aria-label="Modelo digital del terreno">
    <defs>
      <linearGradient id="height" gradientUnits="userSpaceOnUse" x1="0" y1="150" x2="0" y2="765">
        {STOPS.map(([y, c]) => <stop key={y} offset={(y - 150) / 615} stopColor={c} />)}
      </linearGradient>
      <linearGradient id="valley" gradientUnits="userSpaceOnUse" x1="0" y1="190" x2="0" y2="640">
        {VALLEY.map(([y, o]) => <stop key={y} offset={(y - 190) / 450} stopColor="#000" stopOpacity={o} />)}
      </linearGradient>
      <clipPath id="basin"><path d={BASIN} shapeRendering="crispEdges" /></clipPath>
      <filter id="soft" filterUnits="userSpaceOnUse" x="500" y="130" width="460" height="660" colorInterpolationFilters="sRGB"><feGaussianBlur stdDeviation="11" /></filter>
      <filter id="fine" filterUnits="userSpaceOnUse" x="500" y="130" width="460" height="660" colorInterpolationFilters="sRGB"><feGaussianBlur stdDeviation="4" /></filter>
    </defs>
    <g clipPath="url(#basin)">
      <path d={BASIN} fill="url(#height)" shapeRendering="crispEdges" />
      <g filter="url(#soft)" fill="none" stroke="#000" strokeLinecap="round" strokeLinejoin="round">
        <path d={RIVER} stroke="url(#valley)" strokeWidth="32" />
        <path d="M800 350L775 400 752 460" strokeOpacity="0.080" strokeWidth="34" />
        <path d="M618 500L626 560 630 640" strokeOpacity="0.250" strokeWidth="22" />
        <path d="M590 610L605 650 612 690" strokeOpacity="0.350" strokeWidth="14" />
        <path d="M888 150L905 190 890 240 868 270" stroke="#fff" strokeOpacity="0.800" strokeWidth="28" />
        <path d="M868 265L848 300 835 325" stroke="#fff" strokeOpacity="0.400" strokeWidth="30" />
        <path d="M870 170L820 222 790 265" stroke="#fff" strokeOpacity="0.450" strokeWidth="16" />
        <path d="M700 370L692 420" stroke="#fff" strokeOpacity="0.180" strokeWidth="20" />
        <path d="M676 465L664 505 656 540" stroke="#fff" strokeOpacity="0.160" strokeWidth="24" />
        <path d="M742 495L722 530 712 550" stroke="#fff" strokeOpacity="0.200" strokeWidth="18" />
        <path d="M735 560L740 600" stroke="#fff" strokeOpacity="0.130" strokeWidth="24" />
      </g>
      <g filter="url(#fine)" fill="none" stroke="#000" strokeLinecap="round" strokeLinejoin="round">
        <path d={RIVER} stroke="url(#valley)" strokeOpacity="0.600" strokeWidth="7" />
        <path d="M636 632L630 650 612 680 606 705" strokeOpacity="0.450" strokeWidth="7" />
        <path d="M625 560L630 600 634 632" strokeOpacity="0.350" strokeWidth="6" />
        <path d="M582 626L600 650 604 690" strokeOpacity="0.400" strokeWidth="6" />
        <path d="M662 690L664 720 672 745" strokeOpacity="0.400" strokeWidth="6" />
        <path d="M778 262L800 257 812 245" strokeOpacity="0.060" strokeWidth="5" />
        <path d="M652 670L654 700M695 665L685 700" stroke="#fff" strokeOpacity="0.050" strokeWidth="12" />
      </g>
    </g>
  </svg>
);

/* ---------- status bar ---------- */

const FIELD = "h-[21px] rounded-sm border border-[#b4b4b4] bg-white";

const Spin = ({ id, label, value }) => (
  <>
    <label htmlFor={id} className="shrink-0">{label}</label>
    <span className={`${FIELD} flex w-[84px] shrink-0`}>
      <input id={id} defaultValue={value} className="min-w-0 flex-1 px-1 outline-none" />
      <span className="flex w-3.5 shrink-0 flex-col items-center justify-center gap-[3px] border-l border-[#b4b4b4] bg-[#f5f5f5]">
        <button aria-label={`Aumentar ${label}`}>
          <svg viewBox="0 0 8 4" className="block h-1 w-2" aria-hidden="true"><path d="M0 4h8L4 0z" fill="#505050" /></svg>
        </button>
        <button aria-label={`Reducir ${label}`}>
          <svg viewBox="0 0 8 4" className="block h-1 w-2" aria-hidden="true"><path d="M0 0h8L4 4z" fill="#505050" /></svg>
        </button>
      </span>
    </span>
  </>
);

const StatusBar = () => (
  <footer className="flex h-7 shrink-0 items-center bg-[#efefef] pt-0.5 pl-1 font-['DejaVu_Sans_Condensed','DejaVu_Sans',sans-serif] text-[11px] whitespace-nowrap">
    <label className={`${FIELD} flex w-[253px] shrink-0 items-center gap-1.5 pl-2`}>
      <Icon name="search" className="size-3.5" />
      <input aria-label="Localizar" placeholder="Escriba para localizar (Ctrl+K)" className="min-w-0 flex-1 outline-none placeholder:text-[#8a8a8a]" />
    </label>
    <span className="ml-1.5">Eliminadas</span>
    <label htmlFor="coord" className="ml-1">Coordenada</label>
    <input id="coord" defaultValue="445608&#160; 4092516" className={`${FIELD} ml-[3px] w-[99px] text-center`} />
    <button aria-label="Conmutar extensión" className="ml-1"><Icon name="track" className="size-4" /></button>
    <label htmlFor="scale" className="ml-3">Escala</label>
    <span className={`${FIELD} relative ml-0.5 flex w-20 shrink-0`}>
      <select id="scale" className="w-full appearance-none pl-1 outline-none">
        <option>1:115056</option>
      </select>
      <span className="pointer-events-none absolute inset-y-0 right-0 flex w-5 items-center justify-center border-l border-[#b4b4b4] bg-[#f7f7f7]"><Caret /></span>
    </span>
    <button aria-label="Bloquear escala" className="mr-1.5 ml-3"><Icon name="lock" className="size-3.5" /></button>
    <div className="flex items-center gap-px"><Spin id="amp" label="Amplificador" value="100%" /></div>
    <div className="ml-2 flex items-center gap-2"><Spin id="rot" label="Rotación" value="0,0 °" /></div>
    <label className="ml-2 flex items-center gap-1"><Tick id="render" />Representar</label>
    <button className="ml-[18px] flex items-center gap-px"><Icon name="crs" className="size-3.5" />EPSG:25830</button>
    <button aria-label="Mensajes" className="ml-6"><Icon name="bubble" className="size-4" /></button>
    <svg viewBox="0 0 12 12" className="mr-0.5 ml-auto size-3 self-end" aria-hidden="true">
      <path d="M9 1h1M6 4h1M9 4h1M3 7h1M6 7h1M9 7h1M0 10h1M3 10h1M6 10h1M9 10h1" stroke="#aaa" strokeWidth="1.200" />
    </svg>
  </footer>
);

export default function App() {
  return (
    <div className="h-screen bg-linear-to-b from-[#ececec] via-[#d6d6d6] to-[#b8b8b8] px-1 pt-[5px] pb-1 font-[Roboto,'Noto_Sans',sans-serif] text-xs text-black">
      <div className="flex h-full flex-col overflow-hidden rounded-lg border border-[#b0b0b0] bg-[#efefef]">
        <TitleBar />
        <MenuBar />
        <Toolbars />
        <main className="flex min-h-0 flex-1">
          <div className="flex w-[243px] shrink-0 flex-col">
            <Browser />
            <div className="flex h-1.5 shrink-0 items-center justify-center">
              <div className="w-4 border-t border-dotted border-[#aaa]" />
            </div>
            <Layers />
          </div>
          <div className="flex w-1.5 shrink-0 items-center justify-center">
            <div className="h-4 border-l border-dotted border-[#aaa]" />
          </div>
          <div className="min-w-0 flex-1 border-y border-l border-[#b4b4b4] bg-white">
            <Terrain />
          </div>
        </main>
        <StatusBar />
      </div>
    </div>
  );
}
